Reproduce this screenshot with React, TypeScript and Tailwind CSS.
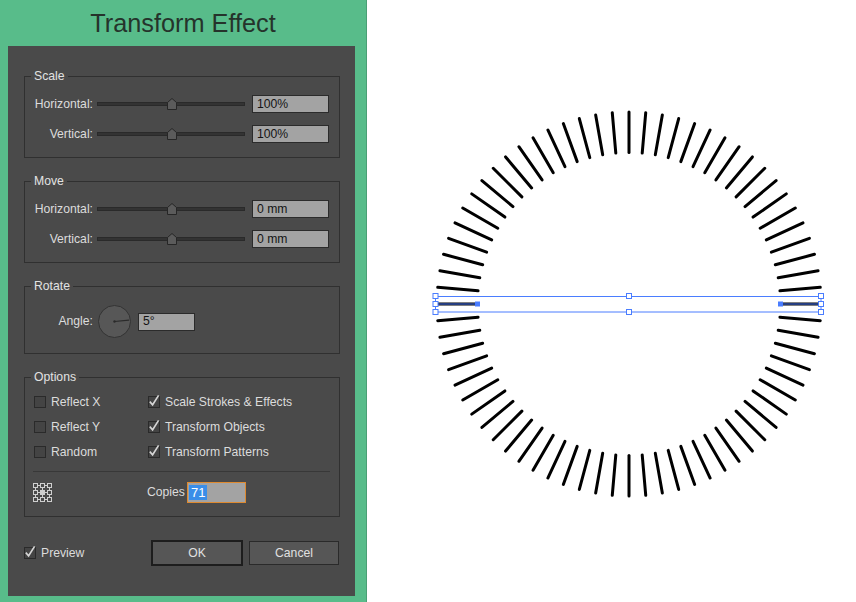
import React from "react";

function Check({ checked }: { checked?: boolean }) {
  return (
    <div className="relative w-[12px] h-[12px] shrink-0 bg-[#444444] border border-[#2a2a2a]">
      {checked && (
        <svg className="absolute left-[-1px] top-[-1px] overflow-visible" width="12" height="12" viewBox="0 0 12 12">
          <path d="M1.8 5.6 L4.6 8.8 L10.6 -0.6" fill="none" stroke="#d6d6d6" strokeWidth="1.6" strokeLinejoin="miter" />
        </svg>
      )}
    </div>
  );
}

function Slider() {
  return (
    <div className="relative ml-[4px] w-[148px] h-[18px] flex items-center">
      <div className="w-full h-[4px] bg-[#333333] border border-[#2a2a2a]" />
      <svg className="absolute left-[70px] top-[3px]" width="10" height="12" viewBox="0 0 10 12">
        <polygon points="0.5,4.5 5,0.5 9.5,4.5 9.5,11.5 0.5,11.5" fill="#5b5b5b" stroke="#262626" strokeWidth="1" />
      </svg>
    </div>
  );
}

function Field({ value, w }: { value: string; w: string }) {
  return (
    <div className={`${w} h-[18px] bg-[#a3a3a3] border border-[#2b2b2b] pl-[4px] flex items-center text-[#141414] leading-none`}>
      {value}
    </div>
  );
}

function SliderRow({ label, value }: { label: string; value: string }) {
  return (
    <div className="flex items-center h-[18px]">
      <div className="w-[68px] text-right">{label}</div>
      <Slider />
      <div className="ml-[7px]">
        <Field value={value} w="w-[77px]" />
      </div>
    </div>
  );
}

function Legend({ children }: { children: React.ReactNode }) {
  return <legend className="ml-[6px] px-[3px] h-[15px] leading-[15px] text-[#e2e2e2]">{children}</legend>;
}

function RefIcon() {
  const pos = [0.5, 7.5, 14.5];
  return (
    <svg width="19" height="19" viewBox="0 0 19 19">
      {pos.map((y) =>
        pos.map((x) => (
          <rect
            key={`${x}-${y}`}
            x={x}
            y={y}
            width="4"
            height="4"
            fill={x === 7.5 && y === 7.5 ? "#cfcfcf" : "none"}
            stroke="#cfcfcf"
            strokeWidth="1"
          />
        ))
      )}
      {pos.map((y) => (
        <g key={`h${y}`}>
          <line x1="5" y1={y + 2} x2="7" y2={y + 2} stroke="#cfcfcf" />
          <line x1="12" y1={y + 2} x2="14" y2={y + 2} stroke="#cfcfcf" />
        </g>
      ))}
      {pos.map((x) => (
        <g key={`v${x}`}>
          <line x1={x + 2} y1="5" x2={x + 2} y2="7" stroke="#cfcfcf" />
          <line x1={x + 2} y1="12" x2={x + 2} y2="14" stroke="#cfcfcf" />
        </g>
      ))}
    </svg>
  );
}

function Canvas() {
  const cx = 262;
  const cy = 304;
  const r1 = 151.5;
  const r2 = 192;
  const lines = Array.from({ length: 72 }, (_, i) => {
    const a = (i * 5 * Math.PI) / 180;
    return {
      x1: cx + r1 * Math.cos(a),
      y1: cy + r1 * Math.sin(a),
      x2: cx + r2 * Math.cos(a),
      y2: cy + r2 * Math.sin(a),
    };
  });
  const blue = "#4a7dff";
  const hx = [cx - 193.5, cx, cx + 192];
  const hy = [296, 304, 312];
  const handles: [number, number][] = [
    [hx[0], hy[0]], [hx[0], hy[1]], [hx[0], hy[2]],
    [hx[1], hy[0]], [hx[1], hy[2]],
    [hx[2], hy[0]], [hx[2], hy[1]], [hx[2], hy[2]],
  ];
  return (
    <svg width="489" height="602" viewBox="0 0 489 602">
      {lines.map((l, i) => (
        <line key={i} x1={l.x1} y1={l.y1} x2={l.x2} y2={l.y2} stroke="#000" strokeWidth="3" strokeLinecap="round" />
      ))}
      <rect x={hx[0]} y={296.5} width={hx[2] - hx[0]} height={15.5} fill="none" stroke={blue} strokeWidth="1" />
      <line x1={cx - 191} y1={304} x2={cx - 151.5} y2={304} stroke={blue} strokeWidth="1" />
      <line x1={cx + 151.5} y1={304} x2={cx + 191} y2={304} stroke={blue} strokeWidth="1" />
      <rect x={cx - 154} y={301.5} width="5" height="5" fill={blue} />
      <rect x={cx + 149} y={301.5} width="5" height="5" fill={blue} />
      {handles.map(([x, y], i) => (
        <rect key={i} x={x - 2.5} y={y - 2.5} width="5" height="5" fill="#fff" stroke={blue} strokeWidth="1" />
      ))}
    </svg>
  );
}

export default function App() {
  return (
    <div className="flex w-[856px] h-[602px] overflow-hidden bg-white font-['Liberation_Sans',Arial,sans-serif] text-[12.2px] text-[#dcdcdc]">
      <div className="w-[367px] shrink-0 bg-[#58bc8a] border-r border-[#4a9f75] flex flex-col">
        <div className="h-[46px] leading-[46px] text-center text-[25.3px] text-[#25332b]">Transform Effect</div>
        <div className="ml-[8px] w-[347px] h-[550px] bg-[#4a4a4a] pl-[16px] pt-[23px] flex flex-col">
          <fieldset className="w-[316px] h-[89px] border border-[#303030]">
            <Legend>Scale</Legend>
            <div className="pt-[11px] flex flex-col gap-[12px]">
              <SliderRow label="Horizontal:" value="100%" />
              <SliderRow label="Vertical:" value="100%" />
            </div>
          </fieldset>

          <fieldset className="mt-[16px] w-[316px] h-[89px] border border-[#303030]">
            <Legend>Move</Legend>
            <div className="pt-[11px] flex flex-col gap-[12px]">
              <SliderRow label="Horizontal:" value="0 mm" />
              <SliderRow label="Vertical:" value="0 mm" />
            </div>
          </fieldset>

          <fieldset className="mt-[16px] w-[316px] h-[75px] border border-[#303030]">
            <Legend>Rotate</Legend>
            <div className="pt-[11px] flex items-center h-[44px]">
              <div className="w-[68px] text-right">Angle:</div>
              <div className="ml-[5px] w-[33px] h-[33px] rounded-full bg-[#575757] border border-[#333333] shrink-0">
                <svg width="31" height="31" viewBox="0 0 31 31">
                  <line x1="15.5" y1="15.5" x2="30" y2="14.2" stroke="#2a2a2a" strokeWidth="1.2" />
                  <circle cx="15.5" cy="15.5" r="1.2" fill="#2a2a2a" />
                </svg>
              </div>
              <div className="ml-[7px]">
                <Field value="5°" w="w-[57px]" />
              </div>
            </div>
          </fieldset>

          <fieldset className="mt-[16px] w-[316px] h-[147px] border border-[#303030]">
            <Legend>Options</Legend>
            <div className="pt-[9px] pl-[9px] grid grid-cols-[114px_1fr] gap-y-[9px]">
              <div className="flex items-center h-[16px]"><Check /><span className="ml-[5px]">Reflect X</span></div>
              <div className="flex items-center h-[16px]"><Check checked /><span className="ml-[5px]">Scale Strokes &amp; Effects</span></div>
              <div className="flex items-center h-[16px]"><Check /><span className="ml-[5px]">Reflect Y</span></div>
              <div className="flex items-center h-[16px]"><Check checked /><span className="ml-[5px]">Transform Objects</span></div>
              <div className="flex items-center h-[16px]"><Check /><span className="ml-[5px]">Random</span></div>
              <div className="flex items-center h-[16px]"><Check checked /><span className="ml-[5px]">Transform Patterns</span></div>
            </div>
            <div className="mt-[11px] ml-[8px] w-[297px] h-[1px] bg-[#383838]" />
            <div className="mt-[10px] ml-[8px] flex items-center h-[21px]">
              <RefIcon />
              <div className="ml-[95px] w-[40px]">Copies</div>
              <div className="w-[59px] h-[21px] bg-[#a3a3a3] border border-[#de8a30] flex items-center pl-[1px]">
                <span className="bg-[#3a8ee8] text-white h-[15px] leading-[15px] px-[2px] text-[13px]">71</span>
              </div>
            </div>
          </fieldset>

          <div className="mt-[23px] w-[316px] h-[26px] flex items-center">
            <Check checked />
            <span className="ml-[5px]">Preview</span>
            <div className="ml-auto w-[92px] h-[26px] bg-[#565656] border-2 border-[#1d1d1d] flex items-center justify-center text-[#e0e0e0]">OK</div>
            <div className="ml-[6px] mr-[1px] w-[90px] h-[24px] bg-[#565656] border border-[#2a2a2a] flex items-center justify-center text-[#e0e0e0]">Cancel</div>
          </div>
        </div>
      </div>
      <div className="flex-1 bg-white">
        <Canvas />
      </div>
    </div>
  );
}
